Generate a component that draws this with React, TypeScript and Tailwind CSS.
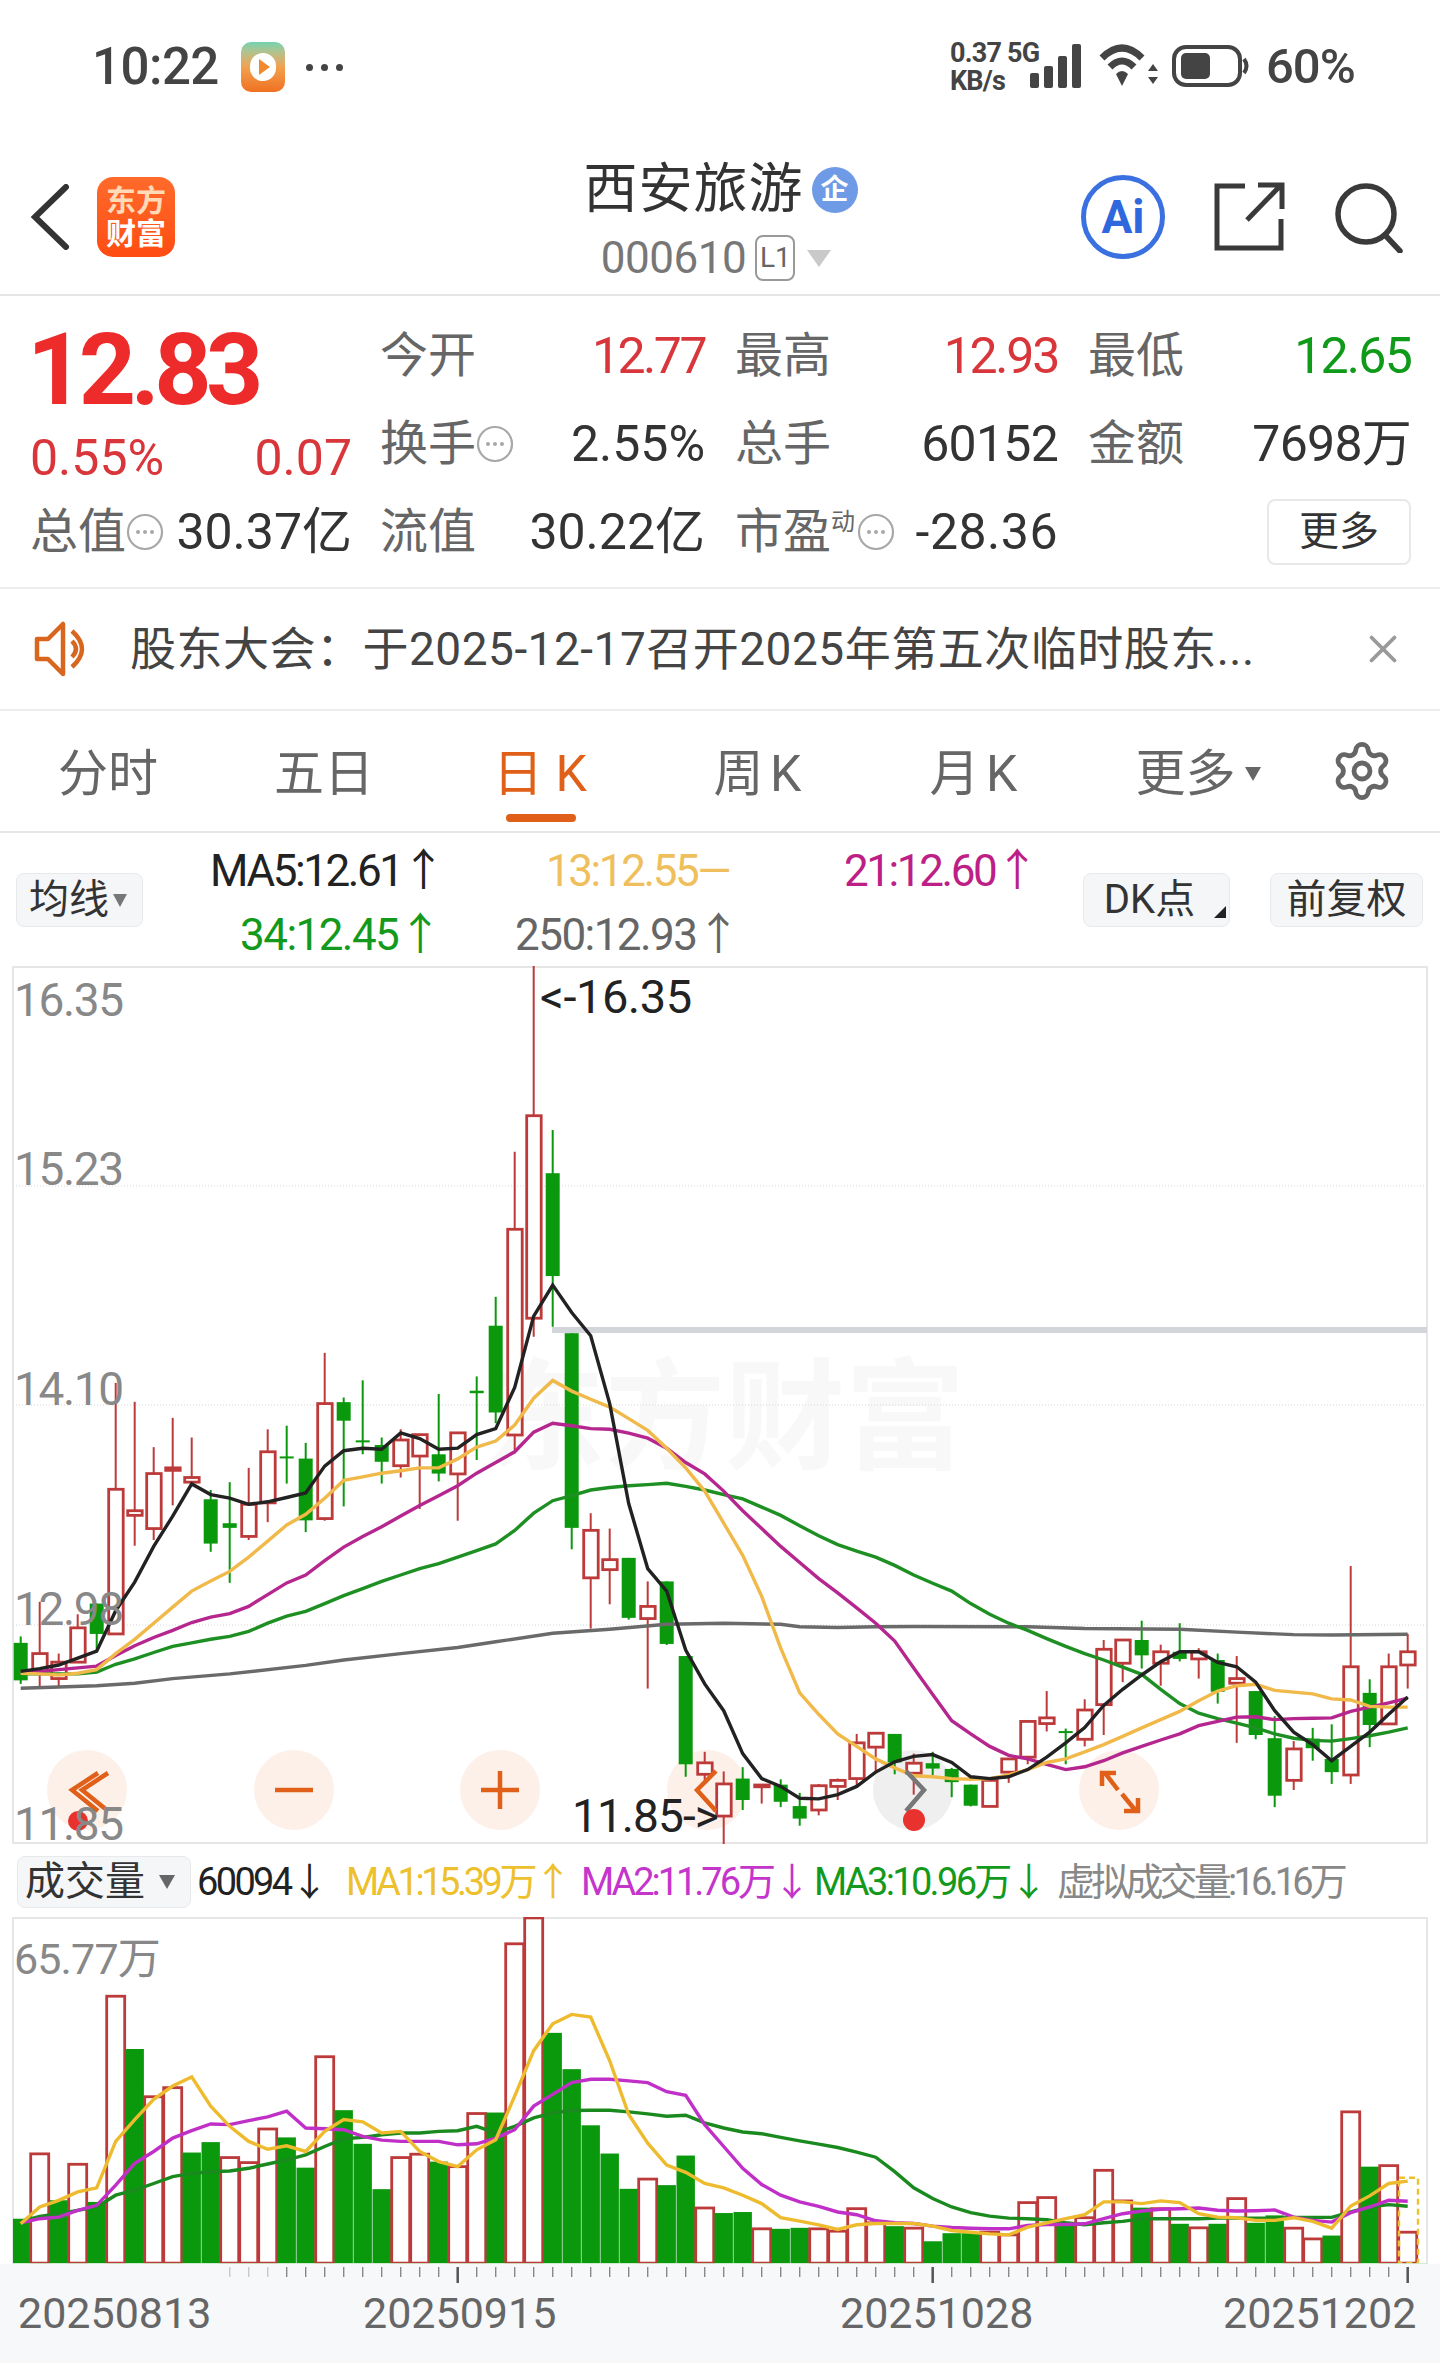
import { Settings, X } from "lucide-react";

// readings taken from the chart, in trace units (x / 2.178, y / 2.8)
const priceY = (z: number) => 334 + z / 2.8;
const volY = (z: number) => z / 2.975 - 68;
const xAt = (i: number) => 20.7 + 19 * i;

type Candle = [number, number, number, number, "r" | "g"];

const candles: Candle[] = [
  [960, 1065, 942, 1075, "g"], [990, 1040, 845, 1082, "r"], [1014, 1060, 990, 1082, "r"], [918, 1014, 880, 1014, "r"],
  [850, 935, 850, 985, "g"], [530, 935, 232, 938, "r"], [590, 603, 285, 688, "r"], [486, 640, 412, 672, "r"],
  [470, 477, 330, 575, "r"], [497, 510, 385, 520, "r"], [558, 682, 532, 705, "g"], [625, 638, 510, 792, "g"],
  [572, 662, 470, 672, "r"], [425, 568, 362, 622, "r"], [438, 441, 352, 514, "g"], [444, 617, 400, 650, "g"],
  [290, 612, 148, 618, "r"], [286, 338, 273, 578, "g"], [393, 397, 225, 432, "g"], [406, 453, 385, 514, "g"],
  [392, 464, 362, 497, "r"], [377, 437, 375, 585, "r"], [432, 486, 263, 508, "g"], [372, 487, 372, 618, "r"],
  [254, 261, 214, 448, "g"], [72, 315, -9, 345, "g"], [-198, 378, -415, 420, "r"], [-516, 51, -935, 103, "r"],
  [-355, -67, -476, 75, "g"], [93, 638, 93, 698, "g"], [645, 778, 597, 920, "r"], [727, 755, 640, 852, "r"],
  [722, 890, 722, 895, "g"], [858, 892, 788, 1088, "r"], [788, 963, 788, 966, "g"], [997, 1300, 997, 1335, "g"],
  [1296, 1328, 1265, 1355, "r"], [1355, 1445, 1320, 1525, "r"], [1340, 1400, 1308, 1428, "g"], [1358, 1363, 1358, 1410, "r"],
  [1357, 1405, 1342, 1420, "g"], [1417, 1452, 1380, 1472, "g"], [1360, 1428, 1355, 1443, "r"], [1345, 1362, 1340, 1400, "r"],
  [1240, 1340, 1215, 1360, "r"], [1213, 1252, 1213, 1320, "r"], [1215, 1295, 1215, 1328, "g"], [1297, 1325, 1270, 1385, "r"],
  [1297, 1312, 1265, 1330, "g"], [1313, 1350, 1310, 1392, "g"], [1357, 1416, 1357, 1418, "g"], [1345, 1418, 1345, 1418, "r"],
  [1285, 1322, 1285, 1352, "r"], [1180, 1280, 1178, 1300, "r"], [1170, 1186, 1095, 1208, "r"], [1207, 1210, 1200, 1300, "g"],
  [1148, 1230, 1118, 1250, "r"], [978, 1133, 952, 1218, "r"], [952, 1017, 952, 1070, "r"], [952, 995, 898, 1032, "g"],
  [985, 1017, 965, 1080, "r"], [985, 1005, 905, 1012, "g"], [985, 1005, 975, 1060, "r"], [1008, 1097, 990, 1130, "g"],
  [1060, 1073, 997, 1240, "r"], [1095, 1218, 1095, 1230, "g"], [1227, 1388, 1165, 1420, "g"], [1257, 1345, 1235, 1372, "r"],
  [1228, 1255, 1198, 1290, "g"], [1285, 1322, 1188, 1355, "g"], [1027, 1330, 745, 1355, "r"], [1100, 1190, 1062, 1252, "g"],
  [1027, 1187, 990, 1187, "r"], [985, 1022, 935, 1088, "r"],
];

const ma5 = [1040,1032,1022,1003,983,870,790,690,605,515,545,555,572,565,553,540,465,422,415,418,372,388,418,415,377,360,245,45,-42,35,100,290,570,752,815,980,1075,1150,1270,1340,1362,1395,1397,1385,1362,1322,1293,1278,1273,1295,1335,1340,1335,1315,1280,1240,1197,1135,1090,1050,1013,985,985,1015,1027,1070,1150,1210,1245,1290,1250,1210,1160,1112];
const ma13 = [1045,1047,1050,1045,1035,990,950,905,860,815,787,760,720,675,630,600,555,505,495,485,478,470,470,445,412,395,350,275,225,255,278,300,332,365,415,470,535,625,715,830,975,1100,1160,1215,1250,1285,1310,1332,1335,1340,1342,1340,1330,1315,1295,1285,1265,1245,1222,1198,1175,1152,1122,1095,1080,1076,1093,1098,1103,1117,1120,1138,1140,1140];
const ma21 = [1043,1040,1035,1030,1025,995,968,945,925,903,888,878,858,825,792,770,730,692,662,635,605,575,548,520,485,455,425,370,345,352,360,362,373,387,415,455,487,535,590,640,690,735,780,820,862,905,955,1030,1105,1178,1215,1250,1275,1285,1300,1315,1307,1290,1268,1250,1232,1215,1192,1180,1168,1167,1175,1172,1171,1170,1152,1140,1128,1115];
const ma34 = [1047,1047,1047,1047,1042,1020,1005,987,970,960,950,942,928,905,885,872,850,828,808,788,770,752,738,720,702,683,645,597,562,548,532,525,520,517,513,522,532,545,557,580,603,632,660,685,703,720,743,770,793,815,850,880,905,925,948,970,990,1008,1028,1048,1090,1130,1157,1172,1185,1198,1215,1227,1233,1235,1228,1220,1210,1198];
const ma250: [number, number][] = [[0,1087],[4,1080],[6,1073],[8,1060],[11,1047],[15,1023],[17,1008],[20,990],[23,973],[25,957],[28,933],[31,922],[34,908],[37,905],[40,908],[41,915],[43,917],[45,915],[47,914],[53,915],[56,920],[61,922],[64,930],[67,937],[69,938],[73,936]];

const volumes: [number, "r" | "g"][] = [
  [1100,"g"],[907,"r"],[1045,"g"],[938,"r"],[1050,"g"],[438,"r"],[595,"g"],[737,"r"],[710,"r"],[903,"g"],
  [872,"g"],[918,"r"],[933,"r"],[833,"r"],[858,"g"],[948,"g"],[618,"r"],[777,"g"],[877,"g"],[1012,"g"],
  [918,"r"],[908,"r"],[930,"g"],[945,"r"],[787,"r"],[784,"g"],[282,"r"],[205,"r"],[547,"g"],[655,"g"],
  [822,"g"],[906,"g"],[1011,"g"],[982,"r"],[1000,"g"],[912,"g"],[1068,"r"],[1083,"g"],[1080,"g"],[1130,"r"],
  [1130,"g"],[1127,"g"],[1130,"r"],[1137,"r"],[1070,"r"],[1112,"r"],[1122,"g"],[1128,"r"],[1167,"g"],[1143,"g"],
  [1143,"g"],[1140,"r"],[1148,"r"],[1052,"r"],[1037,"r"],[1120,"g"],[1097,"r"],[956,"r"],[1047,"r"],[1067,"g"],
  [1070,"r"],[1115,"g"],[1127,"r"],[1115,"g"],[1040,"r"],[1112,"g"],[1090,"g"],[1128,"r"],[1160,"r"],[1150,"g"],
  [782,"r"],[945,"g"],[942,"r"],[1140,"r"],
];
const vol1 = [1115,1065,1045,1020,1008,870,805,745,705,678,765,825,870,893,883,900,840,805,812,845,840,900,930,945,895,865,735,600,520,492,500,630,790,875,940,962,995,1008,1030,1055,1097,1107,1118,1132,1118,1114,1114,1114,1122,1135,1140,1145,1148,1125,1112,1100,1088,1050,1050,1055,1047,1052,1085,1095,1097,1105,1105,1097,1108,1128,1062,1032,995,988];
const vol2 = [1112,1100,1095,1075,1060,1000,935,900,860,838,818,820,808,797,780,830,832,835,855,866,870,870,870,880,877,860,835,765,730,695,685,685,690,695,722,733,820,885,950,998,1030,1050,1063,1080,1088,1106,1112,1114,1122,1126,1128,1130,1130,1120,1117,1117,1115,1100,1085,1077,1072,1070,1068,1075,1077,1076,1074,1095,1105,1110,1082,1065,1045,1048];
const vol3 = [1108,1093,1085,1075,1065,1030,1015,995,975,965,960,958,950,937,925,910,885,862,858,850,845,845,840,838,825,845,825,800,785,778,777,777,782,788,795,792,815,830,842,847,858,868,878,888,902,917,960,1008,1040,1065,1082,1092,1098,1100,1103,1112,1118,1112,1108,1100,1100,1100,1100,1098,1098,1098,1098,1096,1096,1096,1080,1065,1058,1063];

const RED = "#bd3a3a";
const GREEN = "#0a990c";

const linePoints = (ys: number[], toY: (z: number) => number) =>
  ys.map((z, i) => `${xAt(i).toFixed(1)},${toY(z).toFixed(1)}`).join(" ");

function InfoDot() {
  return (
    <svg width="38" height="38" viewBox="0 0 38 38" className="shrink-0">
      <circle cx="19" cy="19" r="17" fill="none" stroke="#a8a8a8" strokeWidth="2.2" />
      <circle cx="12" cy="19" r="2" fill="#a8a8a8" />
      <circle cx="19" cy="19" r="2" fill="#a8a8a8" />
      <circle cx="26" cy="19" r="2" fill="#a8a8a8" />
    </svg>
  );
}

function Stat({ label, value, color, info }: { label: string; value: string; color: string; info?: boolean }) {
  return (
    <div className="flex items-center justify-between h-[88px]">
      <span className="flex items-center text-[48px] text-[#666]">
        {label}
        {info && <InfoDot />}
      </span>
      <span className={`text-[50px] ${color}`}>{value}</span>
    </div>
  );
}

function StatusBar() {
  return (
    <div className="h-[134px] flex items-center justify-between pl-[92px] pr-[86px] text-[#444]">
      <div className="flex items-center">
        <span className="text-[51px] font-medium tracking-[-0.01em]">10:22</span>
        <div className="ml-[22px] w-[44px] h-[50px] rounded-[10px] bg-gradient-to-b from-[#6fd3b0] via-[#f0a14e] to-[#f0701f] flex items-center justify-center">
          <div className="w-[26px] h-[28px] rounded-full bg-white flex items-center justify-center">
            <div className="w-0 h-0 ml-[3px] border-y-[8px] border-y-transparent border-l-[11px] border-l-[#f08a2c]" />
          </div>
        </div>
        <div className="ml-[21px] flex gap-[8px]">
          <div className="w-[7px] h-[7px] rounded-full bg-[#444]" />
          <div className="w-[7px] h-[7px] rounded-full bg-[#444]" />
          <div className="w-[7px] h-[7px] rounded-full bg-[#444]" />
        </div>
      </div>
      <div className="flex items-center">
        <div className="w-[80px] text-[27px] font-bold leading-[28px] whitespace-nowrap tracking-[-0.03em]">
          <div>0.37 5G</div>
          <div>KB/s</div>
        </div>
        <svg width="236" height="50" viewBox="0 0 236 50">
          <rect x="0" y="31" width="9" height="15" rx="2" fill="#444" />
          <rect x="14" y="24" width="9" height="22" rx="2" fill="#444" />
          <rect x="28" y="14" width="9" height="32" rx="2" fill="#444" />
          <rect x="42" y="2" width="9" height="44" rx="2" fill="#444" />
          <path d="M72 16 Q92 -4 112 16" fill="none" stroke="#444" strokeWidth="7" />
          <path d="M80 25 Q92 13 104 25" fill="none" stroke="#444" strokeWidth="7" />
          <path d="M86 32 Q92 26 98 32 L92 44 Z" fill="#444" />
          <path d="M118 29 l5 -7 l5 7 Z M118 35 l5 7 l5 -7 Z" fill="#444" />
          <rect x="144" y="5" width="66" height="38" rx="12" fill="none" stroke="#444" strokeWidth="4" />
          <rect x="151" y="11" width="29" height="26" rx="5" fill="#444" />
          <path d="M214 17 q5 7 0 14" fill="none" stroke="#444" strokeWidth="4" />
        </svg>
        <span className="w-[88px] text-[49px] font-medium tracking-[-0.02em] whitespace-nowrap">60%</span>
      </div>
    </div>
  );
}

function NavBar() {
  return (
    <div className="h-[162px] grid grid-cols-[1fr_auto_1fr] border-b-2 border-[#e6e6e6]">
      <div className="flex items-center pl-[30px] pt-[5px]">
        <svg width="40" height="66" viewBox="0 0 40 66" fill="none" stroke="#333" strokeWidth="6" strokeLinecap="round">
          <path d="M36 3 L5 33 L36 63" />
        </svg>
        <div className="ml-[27px] w-[78px] h-[80px] rounded-[16px] bg-gradient-to-b from-[#ff6a2a] to-[#ff4c12] flex flex-col items-center justify-center text-[30px] font-bold leading-[33px]">
          <span className="text-[#ffd9b8]">东方</span>
          <span className="text-white">财富</span>
        </div>
      </div>
      <div className="flex flex-col items-center pt-[26px]">
        <div className="flex items-center h-[60px] pl-[1px]">
          <span className="text-[54px] leading-none text-[#333] tracking-[1px]">西安旅游</span>
          <span className="ml-[8px] w-[46px] h-[46px] rounded-full bg-[#6f9ae6] text-white text-[28px] font-bold flex items-center justify-center">企</span>
        </div>
        <div className="flex items-center h-[60px] mt-[8px] pr-[8px]">
          <span className="text-[44px] leading-none text-[#777] tracking-[-0.01em]">000610</span>
          <span className="ml-[9px] w-[40px] h-[46px] rounded-[8px] border-2 border-[#999] text-[28px] text-[#666] flex items-center justify-center">L1</span>
          <div className="ml-[12px] w-0 h-0 border-x-[12px] border-x-transparent border-t-[17px] border-t-[#c9c9c9]" />
        </div>
      </div>
      <div className="flex items-center justify-end pr-[36px] pt-[5px]">
        <div className="w-[84px] h-[84px] rounded-full border-[5px] border-[#3a70e0] flex items-center justify-center text-[#2f67dd] text-[46px] font-bold leading-none">
          Ai
        </div>
        <svg width="72" height="72" viewBox="0 0 72 72" className="ml-[48px]" fill="none" stroke="#3a3a3a" strokeWidth="5">
          <path d="M32 5 H4 V67 H68 V38" />
          <path d="M34 39 L67 5 M45 4 H69 V28" />
        </svg>
        <svg width="72" height="72" viewBox="0 0 72 72" className="ml-[47px]" fill="none" stroke="#3a3a3a" strokeWidth="5.5">
          <circle cx="34" cy="33" r="28" />
          <path d="M53 54 L68 70" strokeLinecap="round" />
        </svg>
      </div>
    </div>
  );
}

function QuoteBlock() {
  return (
    <div className="h-[293px] border-b-2 border-[#ececec] pl-[28px] pt-[16px] grid grid-cols-[322px_325px_323px_323px] gap-x-[30px] grid-rows-[88px_88px_88px] leading-none whitespace-nowrap">
      <div className="row-span-2 flex flex-col pl-[2px] -mr-[2px]">
        <span className="text-[100px] font-bold text-[#ee2b2b] tracking-[-0.055em] leading-[100px] mt-[8px] -ml-[3px]">12.83</span>
        <div className="flex justify-between mt-[13px] text-[50px] text-[#d8363a]">
          <span>0.55%</span>
          <span>0.07</span>
        </div>
      </div>
      <Stat label="今开" value="12.77" color="text-[#d8363a] tracking-[-0.05em]" />
      <Stat label="最高" value="12.93" color="text-[#d8363a] tracking-[-0.045em]" />
      <Stat label="最低" value="12.65" color="text-[#0f9a1a] tracking-[-0.035em]" />
      <Stat label="换手" value="2.55%" color="text-[#333]" info />
      <Stat label="总手" value="60152" color="text-[#333] tracking-[-0.015em]" />
      <Stat label="金额" value="7698万" color="text-[#333] tracking-[-0.015em]" />
      <div className="flex items-center justify-between h-[88px] pl-[2px] -mr-[2px]">
        <span className="flex items-center text-[48px] text-[#666]">总值<InfoDot /></span>
        <span className="text-[50px] text-[#333]">30.37亿</span>
      </div>
      <Stat label="流值" value="30.22亿" color="text-[#333]" />
      <div className="flex items-center justify-between h-[88px]">
        <span className="flex items-center text-[48px] text-[#666]">
          市盈
          <span className="text-[24px] self-start mt-[2px] mr-[2px]">动</span>
          <InfoDot />
        </span>
        <span className="text-[50px] text-[#333] tracking-[0.01em]">-28.36</span>
      </div>
      <div className="flex items-center justify-end h-[88px]">
        <div className="w-[144px] h-[66px] rounded-[8px] border-2 border-[#e8e8e8] flex items-center justify-center text-[40px] text-[#333]">更多</div>
      </div>
    </div>
  );
}

function Notice() {
  return (
    <div className="h-[122px] border-b-2 border-[#ececec] flex items-center pl-[34px] pr-[34px] whitespace-nowrap">
      <svg width="60" height="60" viewBox="0 0 60 60" fill="none" stroke="#d9661f" strokeWidth="4.5" strokeLinejoin="round">
        <path d="M3 20 H14 L29 5 V55 L14 40 H3 Z" />
        <path d="M38 12 Q58 30 38 48" />
        <path d="M38 22 Q46 30 38 38" />
      </svg>
      <span className="ml-[36px] text-[46px] text-[#444] tracking-[0.5px]">股东大会：于2025-12-17召开2025年第五次临时股东...</span>
      <X size={46} strokeWidth={2} color="#9a9a9a" className="ml-auto" />
    </div>
  );
}

function Tabs() {
  const tabs = ["分时", "五日", "日 K", "周 K", "月 K"];
  return (
    <div className="h-[122px] border-b-2 border-[#e6e6e6] flex items-center whitespace-nowrap">
      {tabs.map((tab, i) => (
        <div key={tab} className={`relative w-[216px] h-full flex items-center justify-center pt-[6px] text-[50px] ${i === 2 ? "text-[#e0601a]" : "text-[#666]"} ${i > 2 ? "tracking-[-3px]" : ""}`}>
          {tab}
          {i === 2 && <div className="absolute bottom-[9px] left-[74px] w-[70px] h-[8px] rounded-full bg-[#e0601a]" />}
        </div>
      ))}
      <div className="w-[216px] flex items-center justify-center text-[50px] text-[#666] pl-[20px] pt-[6px]">
        更多
        <div className="ml-[9px] w-0 h-0 border-x-[8px] border-x-transparent border-t-[14px] border-t-[#666]" />
      </div>
      <Settings size={64} strokeWidth={1.8} color="#666" className="ml-[34px]" />
    </div>
  );
}

function ChipButton({ children, className }: { children: React.ReactNode; className: string }) {
  return (
    <div className={`h-[54px] rounded-[8px] bg-[#f5f6f8] border border-[#e8e9ec] flex items-center justify-center text-[40px] text-[#333] ${className}`}>
      {children}
    </div>
  );
}

function MaRow() {
  return (
    <div className="h-[133px] flex whitespace-nowrap">
      <div className="pl-[16px] pt-[40px]">
        <ChipButton className="w-[127px] pr-[3px]">
          均线
          <div className="ml-[4px] w-0 h-0 border-x-[7px] border-x-transparent border-t-[13px] border-t-[#777]" />
        </ChipButton>
      </div>
      <div className="w-[880px] shrink-0 pl-[67px] text-[44px] leading-[64px] pt-[6px]">
        <div className="flex tracking-[-0.055em]">
          <span className="w-[336px] shrink-0 text-[#222]">MA5:12.61↑</span>
          <span className="w-[298px] shrink-0 text-[#efbf5e]">13:12.55—</span>
          <span className="shrink-0 text-[#bd1f86]">21:12.60↑</span>
        </div>
        <div className="flex pl-[30px] tracking-[-0.035em]">
          <span className="w-[275px] shrink-0 text-[#139a1c]">34:12.45↑</span>
          <span className="shrink-0 text-[#666]">250:12.93↑</span>
        </div>
      </div>
      <div className="pt-[40px] pl-[60px] flex gap-[40px]">
        <ChipButton className="w-[147px] relative pr-[14px]">
          DK点
          <div className="absolute right-[3px] bottom-[8px] w-0 h-0 border-l-[12px] border-l-transparent border-b-[12px] border-b-[#222]" />
        </ChipButton>
        <ChipButton className="w-[153px]">前复权</ChipButton>
      </div>
    </div>
  );
}

function PriceChart() {
  return (
    <div className="relative h-[878px] whitespace-nowrap leading-none">
      <svg width="1440" height="878" viewBox="0 0 1440 878" className="absolute inset-0">
        <rect x="13" y="1" width="1414" height="876" fill="white" stroke="#e6e6e6" strokeWidth="2" />
        <text x="485" y="494" fontSize="120" fontWeight="700" fill="#f8f8f8" fontFamily="Noto Sans CJK SC">东方财富</text>
        {[220, 439, 659].map((y) => (
          <line key={y} x1="13" x2="1427" y1={y} y2={y} stroke="#d6d6d6" strokeWidth="1" strokeDasharray="1 2" />
        ))}
        <rect x="552" y="361" width="875" height="6" fill="#d2d5da" />
        {[87, 294, 500, 707, 1119].map((cx) => (
          <circle key={cx} cx={cx} cy="824" r="40" fill="#fdf0e9" />
        ))}
        <circle cx="913" cy="824" r="40" fill="#efefef" />
        {candles.map(([top, bottom, high, low, kind], i) => {
          const x = xAt(i);
          const color = kind === "r" ? RED : GREEN;
          return (
            <g key={i}>
              <line x1={x} x2={x} y1={priceY(high)} y2={priceY(low)} stroke={color} strokeWidth="2" />
              {kind === "r" ? (
                <rect x={x - 7} y={priceY(top)} width="14.5" height={priceY(bottom) - priceY(top)} fill="white" stroke={color} strokeWidth="2.8" />
              ) : (
                <rect x={x - 7} y={priceY(top)} width="14" height={Math.max(priceY(bottom) - priceY(top), 2)} fill={color} />
              )}
            </g>
          );
        })}
        <polyline points={ma250.map(([i, z]) => `${xAt(i)},${priceY(z)}`).join(" ")} fill="none" stroke="#6a6a6a" strokeWidth="3.4" />
        <polyline points={linePoints(ma34, priceY)} fill="none" stroke="#1e8f22" strokeWidth="3.4" />
        <polyline points={linePoints(ma21, priceY)} fill="none" stroke="#b5268f" strokeWidth="3.4" />
        <polyline points={linePoints(ma13, priceY)} fill="none" stroke="#f0b94a" strokeWidth="3.4" />
        <polyline points={linePoints(ma5, priceY)} fill="none" stroke="#222" strokeWidth="3.4" />
        <g fill="none" stroke="#e0601a" strokeWidth="4.5">
          <path d="M98 807 L72 824 L98 845 M108 807 L82 824 L108 845" />
          <path d="M275 824 H313" />
          <path d="M481 824 H519 M500 805 V843" />
          <path d="M716 805 L697 824 L716 845" />
          <path d="M1105 807 L1118 824 M1102 820 V807 H1116 M1136 845 L1122 828 M1138 832 V845 H1124" />
        </g>
        <path d="M906 805 L924 824 L906 845" fill="none" stroke="#777" strokeWidth="4.5" />
        <circle cx="78" cy="855" r="10" fill="#e8322e" />
        <circle cx="914" cy="854" r="11" fill="#e8322e" />
      </svg>
      <span className="absolute left-[14px] top-[11px] text-[46px] text-[#888] tracking-[-0.03em]">16.35</span>
      <span className="absolute left-[14px] top-[180px] text-[46px] text-[#888] tracking-[-0.03em]">15.23</span>
      <span className="absolute left-[14px] top-[400px] text-[46px] text-[#888] tracking-[-0.03em]">14.10</span>
      <span className="absolute left-[14px] top-[620px] text-[46px] text-[#888] tracking-[-0.03em]">12.98</span>
      <span className="absolute left-[14px] top-[835px] text-[46px] text-[#888] tracking-[-0.03em]">11.85</span>
      <span className="absolute left-[540px] top-[7px] text-[47px] text-[#222] tracking-[-0.01em]">&lt;-16.35</span>
      <span className="absolute left-[572px] top-[827px] text-[46px] text-[#222] tracking-[-0.02em]">11.85-&gt;</span>
    </div>
  );
}

function VolumeHeader() {
  return (
    <div className="h-[73px] flex items-center whitespace-nowrap text-[38px] pt-[3px]">
      <div className="ml-[17px] w-[174px] h-[52px] shrink-0 rounded-[8px] bg-[#f5f6f8] border border-[#e8e9ec] flex items-center justify-center pr-[8px] text-[#333] text-[40px]">
        成交量
        <div className="ml-[14px] w-0 h-0 border-x-[8px] border-x-transparent border-t-[14px] border-t-[#666]" />
      </div>
      <span className="ml-[6px] w-[149px] shrink-0 text-[#222] tracking-[-0.07em]">60094↓</span>
      <span className="w-[235px] shrink-0 text-[#edc02d] tracking-[-0.09em]">MA1:15.39万↑</span>
      <span className="w-[233px] shrink-0 text-[#c435cb] tracking-[-0.08em]">MA2:11.76万↓</span>
      <span className="w-[243px] shrink-0 text-[#139a1c] tracking-[-0.07em]">MA3:10.96万↓</span>
      <span className="text-[#888] tracking-[-0.1em]">虚拟成交量:16.16万</span>
    </div>
  );
}

function VolumeChart() {
  const base = volY(1232);
  return (
    <div className="relative h-[347px] leading-none whitespace-nowrap">
      <svg width="1440" height="347" viewBox="0 0 1440 347" className="absolute inset-0">
        <rect x="13" y="1" width="1414" height="346" fill="white" stroke="#e6e6e6" strokeWidth="2" />
        {volumes.map(([top, kind], i) => {
          const x = xAt(i);
          if (kind === "r") {
            return <rect key={i} x={x - 9} y={volY(top)} width="18" height={base - volY(top)} fill="white" stroke={RED} strokeWidth="2.8" />;
          }
          const left = Math.max(x - 9.2, 13);
          return <rect key={i} x={left} y={volY(top)} width={x + 9.2 - left} height={base - volY(top)} fill={GREEN} />;
        })}
        <rect x={1399} y={volY(978)} width="19" height={base - volY(978)} fill="none" stroke="#edc02d" strokeWidth="2.4" strokeDasharray="6 4" />
        <rect x="13" y={base} width="1414" height="2" fill="#cfeecf" />
        <polyline points={linePoints(vol3, volY)} fill="none" stroke="#1a8a1e" strokeWidth="3.4" />
        <polyline points={linePoints(vol2, volY)} fill="none" stroke="#c030c8" strokeWidth="3.4" />
        <polyline points={linePoints(vol1, volY)} fill="none" stroke="#edbb2d" strokeWidth="3.4" />
      </svg>
      <span className="absolute left-[14px] top-[21px] text-[43px] text-[#888] tracking-[-0.02em]">65.77万</span>
    </div>
  );
}

function DateAxis() {
  return (
    <div className="relative h-[99px] bg-[#f7f8fa] leading-none">
      <svg width="1440" height="24" viewBox="0 0 1440 24" className="absolute inset-x-0 top-0">
        {candles.map((_, i) => {
          if (i < 11) return null;
          const major = i === 23 || i === 48 || i === 73;
          return (
            <line key={i} x1={xAt(i)} x2={xAt(i)} y1="3" y2={major ? 19 : 13} stroke={i < 14 ? "#c8c8c8" : major ? "#555" : "#888"} strokeWidth={major ? 2.5 : 1.4} />
          );
        })}
      </svg>
      <span className="absolute left-[18px] top-[28px] text-[43px] text-[#666]">20250813</span>
      <span className="absolute left-[363px] top-[28px] text-[43px] text-[#666]">20250915</span>
      <span className="absolute left-[840px] top-[28px] text-[43px] text-[#666]">20251028</span>
      <span className="absolute left-[1223px] top-[28px] text-[43px] text-[#666]">20251202</span>
    </div>
  );
}

export default function App() {
  return (
    <div className="w-[1440px] h-[2377px] overflow-hidden bg-white font-['Roboto','Noto_Sans_CJK_SC',sans-serif]">
      <StatusBar />
      <NavBar />
      <QuoteBlock />
      <Notice />
      <Tabs />
      <MaRow />
      <PriceChart />
      <VolumeHeader />
      <VolumeChart />
      <DateAxis />
    </div>
  );
}
